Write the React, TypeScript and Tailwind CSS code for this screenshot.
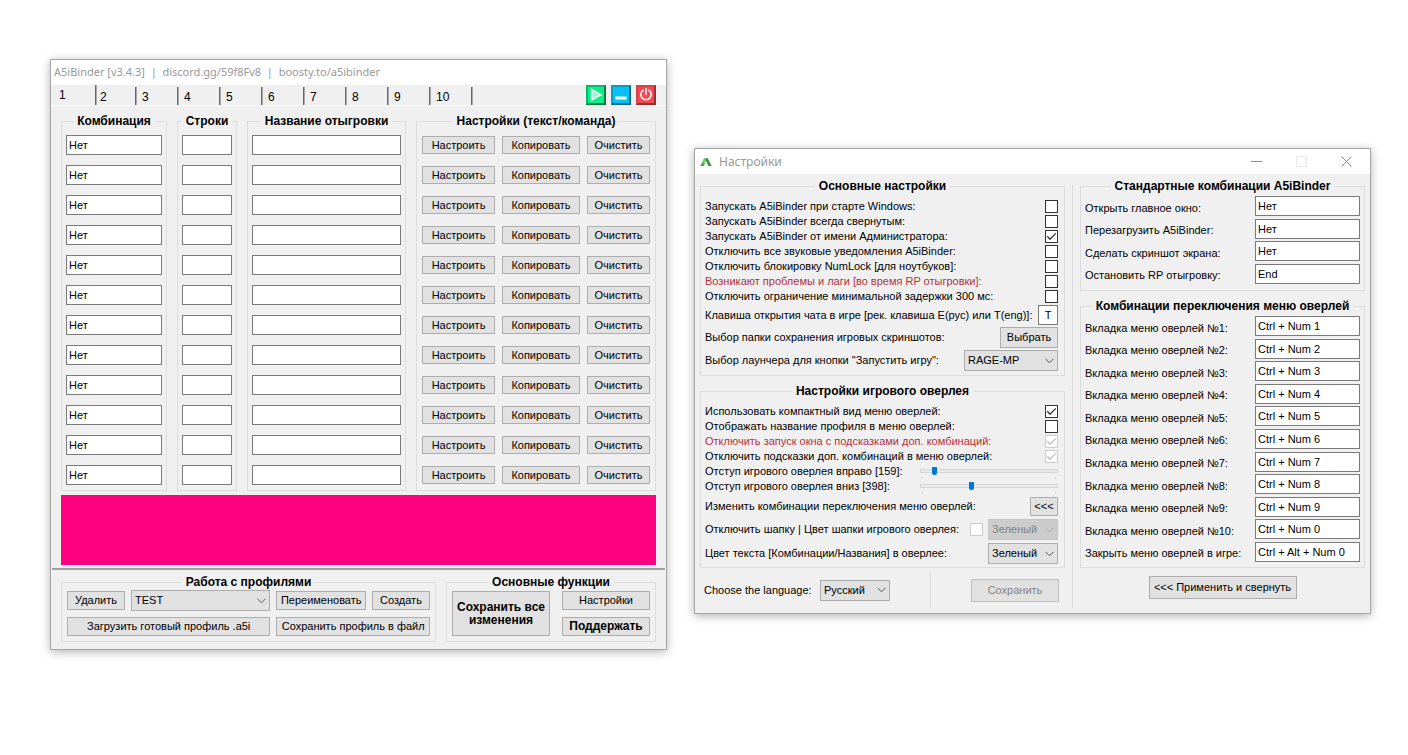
import React from "react";

const rows = Array.from({ length: 12 }, (_, i) => i + 1);
const tabs = Array.from({ length: 10 }, (_, i) => i + 1);

const Button = ({ className = "", children = null as React.ReactNode, ...rest }) => (
    <button
        type="button"
        className={`border border-[#adadad] bg-[#e1e1e1] text-center whitespace-nowrap ${className}`}
        {...rest}
    >
        {children}
    </button>
);

const Input = ({ className = "", ...rest }) => (
    <input
        type="text"
        className={`block h-5 w-full min-w-0 border border-[#7a7a7a] bg-white outline-none ${className}`}
        {...rest}
    />
);

const Group = ({ title = "", className = "", children = null as React.ReactNode }) => (
    <fieldset className={`min-w-0 border border-[#dcdcdc] ${className}`}>
        <legend className="mx-auto px-1 text-[12px] leading-[14px] font-bold whitespace-nowrap">{title}</legend>
        {children}
    </fieldset>
);

const Select = ({ id = "", label = "", options = [] as string[], disabled = false, className = "" }) => (
    <div className={`grid h-[21px] items-center ${className}`}>
        <select
            id={id || undefined}
            aria-label={label || undefined}
            disabled={disabled}
            className={
                disabled
                    ? "col-start-1 row-start-1 h-full w-full appearance-none border border-[#c5c5c5] bg-[#cccccc] px-[3px] text-[#838383]"
                    : "col-start-1 row-start-1 h-full w-full appearance-none border border-[#adadad] bg-[#e1e1e1] px-[3px]"
            }
        >
            {options.map(o => <option key={o}>{o}</option>)}
        </select>
        <svg
            viewBox="0 0 9 6"
            className={`pointer-events-none col-start-1 row-start-1 mr-1 h-[6px] w-[9px] justify-self-end ${disabled ? "text-[#a8a8a8]" : "text-[#555555]"}`}
            fill="none"
            stroke="currentColor"
        >
            <path d="M0.5 0.8 L4.5 4.8 L8.5 0.8" />
        </svg>
    </div>
);

const Checkbox = ({ id = "", checked = false, disabled = false }) => (
    <span className="grid size-[13px] shrink-0">
        <input
            id={id}
            type="checkbox"
            defaultChecked={checked}
            disabled={disabled}
            className="peer col-start-1 row-start-1 size-[13px] appearance-none border border-[#333333] bg-white disabled:border-[#cccccc]"
        />
        <svg
            viewBox="0 0 13 13"
            className="pointer-events-none invisible col-start-1 row-start-1 size-[13px] text-[#333333] peer-checked:visible peer-disabled:text-[#c0c0c0]"
            fill="none"
            stroke="currentColor"
            strokeWidth="1.3"
        >
            <path d="M2.3 6.3 L5 9.2 L10.8 3.4" />
        </svg>
    </span>
);

const CheckRow = ({ id = "", label = "", checked = false, disabled = false, red = false }) => (
    <div className="flex h-[15px] items-center justify-between">
        <label htmlFor={id} className={red ? "text-[#b5313a]" : ""}>{label}</label>
        <Checkbox id={id} checked={checked} disabled={disabled} />
    </div>
);

const SliderRow = ({ id = "", label = "", max = 100, value = 0 }) => (
    <div className="flex h-[15px] items-center justify-between">
        <label htmlFor={id}>{label}</label>
        <div className="flex w-[138px] flex-col pt-[3px]">
            <input
                id={id}
                type="range"
                max={max}
                defaultValue={value}
                className="block h-2 w-full appearance-none bg-transparent [&::-webkit-slider-runnable-track]:h-[4px] [&::-webkit-slider-runnable-track]:border [&::-webkit-slider-runnable-track]:border-[#d6d6d6] [&::-webkit-slider-runnable-track]:bg-[#e7eaea] [&::-webkit-slider-thumb]:-mt-[3px] [&::-webkit-slider-thumb]:h-[8px] [&::-webkit-slider-thumb]:w-[5px] [&::-webkit-slider-thumb]:appearance-none [&::-webkit-slider-thumb]:rounded-b-[2px] [&::-webkit-slider-thumb]:bg-[#0078d7]"
            />
            <div className="mt-[2px] flex h-[2px] justify-between px-[2px]">
                <span className="w-px bg-[#d0d0d0]" />
                <span className="w-px bg-[#d0d0d0]" />
            </div>
        </div>
    </div>
);

const HotkeyRow = ({ id = "", label = "", value = "" }) => (
    <div className="flex h-5 items-center justify-between">
        <label htmlFor={id} className="pt-1">{label}</label>
        <div className="w-[105px]">
            <Input id={id} defaultValue={value} className="px-[2px]" />
        </div>
    </div>
);

const BinderWindow = () => (
    <section className="mt-[59px] border border-[#a5a5a5] bg-[#f0f0f0] pb-[7px] shadow-[0_2px_9px_rgba(0,0,0,0.3)]">
        <header className="h-[25px] bg-white pl-[3px] font-['Noto_Sans',sans-serif] text-[11px] leading-[24px] text-[#999999]">
            A5iBinder [v3.4.3] &nbsp;|&nbsp; discord.gg/59f8Fv8 &nbsp;|&nbsp; boosty.to/a5ibinder
        </header>

        <div className="flex h-[21px] items-start justify-between border-b border-white pr-[10px] pl-px">
            <nav className="flex h-5 items-end text-[12px]" role="tablist">
                {tabs.map(n => (
                    <button
                        key={n}
                        type="button"
                        role="tab"
                        aria-selected={n === 1}
                        className={
                            n === 1
                                ? "-mr-[2px] h-5 w-[45px] border-r border-[#a8a8a8] pl-[7px] text-left leading-5 shadow-[inset_-1px_0_#696969]"
                                : "h-[18px] w-[42px] border-r border-[#a8a8a8] pt-px pl-[5px] text-left leading-[18px] shadow-[inset_-1px_0_#696969]"
                        }
                    >
                        {n}
                    </button>
                ))}
            </nav>
            <div className="flex gap-[5px]">
                <button type="button" aria-label="Запустить" className="size-5 border-2 border-t-[#0bb56a] border-r-[#067a45] border-b-[#067a45] border-l-[#0bb56a] bg-[#0cf08a]">
                    <svg viewBox="0 0 16 16" className="size-4" fill="#8ff8c8" stroke="#ffffff" strokeWidth="1.8">
                        <path d="M3.8 2.8 L12.6 7.8 L3.8 12.8 Z" />
                    </svg>
                </button>
                <button type="button" aria-label="Свернуть" className="size-5 border-2 border-t-[#0b9cc6] border-r-[#086a88] border-b-[#086a88] border-l-[#0b9cc6] bg-[#06c1f3]">
                    <svg viewBox="0 0 16 16" className="size-4">
                        <rect x="2.5" y="9.5" width="11" height="3" fill="#ffffff" />
                    </svg>
                </button>
                <button type="button" aria-label="Выход" className="size-5 border-2 border-t-[#d4444b] border-r-[#9c2c33] border-b-[#9c2c33] border-l-[#d4444b] bg-[#ee4b52]">
                    <svg viewBox="0 0 16 16" className="size-4" fill="none" stroke="#ffffff" strokeWidth="1.5" strokeLinecap="round">
                        <path d="M5 3.4 A5.2 5.2 0 1 0 11 3.4 M8 1.6 V7.5" />
                    </svg>
                </button>
            </div>
        </div>

        <div className="grid grid-cols-[106fr_60fr_159fr_240fr] gap-[10px] px-[10px] pt-2">
            <Group title="Комбинация">
                <div className="grid gap-[10px] px-1 pt-[7px] pb-[5px]">
                    {rows.map(n => <Input key={n} aria-label={`Комбинация ${n}`} defaultValue="Нет" className="px-[2px]" />)}
                </div>
            </Group>
            <Group title="Строки">
                <div className="grid gap-[10px] px-1 pt-[7px] pb-[5px]">
                    {rows.map(n => <Input key={n} aria-label={`Строки ${n}`} />)}
                </div>
            </Group>
            <Group title="Название отыгровки">
                <div className="grid gap-[10px] px-1 pt-[7px] pb-[5px]">
                    {rows.map(n => <Input key={n} aria-label={`Название отыгровки ${n}`} />)}
                </div>
            </Group>
            <Group title="Настройки (текст/команда)">
                <div className="grid gap-[10px] px-[5px] pt-[7px] pb-[5px]">
                    {rows.map(n => (
                        <div key={n} className="grid h-5 grid-cols-[73fr_78fr_63fr] gap-[7px] py-px">
                            <Button>Настроить</Button>
                            <Button>Копировать</Button>
                            <Button>Очистить</Button>
                        </div>
                    ))}
                </div>
            </Group>
        </div>

        <div className="mx-[10px] mt-1 h-[70px] bg-[#ff0080]" />
        <hr className="mx-px mt-[3px] border-t-2 border-[#a0a0a0]" />

        <div className="grid grid-cols-[375fr_210fr] gap-[10px] px-[10px] pt-[5px]">
            <Group title="Работа с профилями">
                <div className="grid grid-cols-[204fr_154fr] gap-[6px] px-[5px] pt-px pb-[5px]">
                    <div className="flex h-[21px] items-center gap-[6px]">
                        <Button className="h-[19px] w-[58px]">Удалить</Button>
                        <Select label="Профиль" options={["TEST"]} className="flex-1" />
                    </div>
                    <div className="flex h-[21px] items-center gap-[6px]">
                        <Button className="h-[19px] flex-1">Переименовать</Button>
                        <Button className="h-[19px] w-[58px]">Создать</Button>
                    </div>
                    <Button className="h-[19px]">Загрузить готовый профиль .a5i</Button>
                    <Button className="h-[19px]">Сохранить профиль в файл</Button>
                </div>
            </Group>
            <Group title="Основные функции">
                <div className="grid grid-cols-[98fr_88fr] gap-3 px-[5px] pt-[2px]">
                    <Button className="h-[45px] text-[12px] leading-[13px] font-bold">
                        Сохранить все<br />изменения
                    </Button>
                    <div className="flex flex-col justify-between">
                        <Button className="h-[19px]">Настройки</Button>
                        <Button className="h-[19px] text-[12px] leading-[13px] font-bold">Поддержать</Button>
                    </div>
                </div>
            </Group>
        </div>
    </section>
);

const SettingsWindow = () => (
    <section className="mt-[148px] border border-[#a5a5a5] bg-[#f0f0f0] shadow-[0_2px_9px_rgba(0,0,0,0.3)]">
        <header className="flex h-[25px] items-center bg-white pr-[18px] pl-[5px] font-['Noto_Sans',sans-serif] text-[12px] text-[#999999]">
            <svg viewBox="0 0 12 10" className="h-[10px] w-3">
                <path d="M0.3 9 L4 1 L7.6 1 L6 4 L3.8 9 Z" fill="#7ccb78" />
                <path d="M5.2 2.2 L7.6 1 L11.7 9 L8.4 9 Z" fill="#3f9146" />
                <path d="M0.3 9 L2.6 5.4 L4.6 7 L3.8 9 Z" fill="#4da652" />
            </svg>
            <span className="ml-[7px]">Настройки</span>
            <div className="ml-auto flex items-center gap-[34px]">
                <button type="button" aria-label="Свернуть">
                    <svg viewBox="0 0 11 11" className="size-[11px]" stroke="#8c8c8c"><path d="M0 5.5 H11" /></svg>
                </button>
                <button type="button" aria-label="Развернуть" disabled>
                    <svg viewBox="0 0 11 11" className="size-[11px]" fill="none" stroke="#e8e8e8"><path d="M0.5 0.5 H10.5 V10.5 H0.5 Z" /></svg>
                </button>
                <button type="button" aria-label="Закрыть">
                    <svg viewBox="0 0 11 11" className="size-[11px]" stroke="#8c8c8c"><path d="M0.5 0.5 L10.5 10.5 M10.5 0.5 L0.5 10.5" /></svg>
                </button>
            </div>
        </header>

        <div className="grid grid-cols-[365fr_1px_285fr] gap-[7px] px-[5px] pt-[5px] pb-[5px]">
            <div className="flex flex-col">
                <Group title="Основные настройки">
                    <div className="pt-[6px] pr-[6px] pb-1 pl-1">
                        <CheckRow id="autostart" label="Запускать A5iBinder при старте Windows:" />
                        <CheckRow id="minimized" label="Запускать A5iBinder всегда свернутым:" />
                        <CheckRow id="admin" label="Запускать A5iBinder от имени Администратора:" checked />
                        <CheckRow id="mute" label="Отключить все звуковые уведомления A5iBinder:" />
                        <CheckRow id="numlock" label="Отключить блокировку NumLock [для ноутбуков]:" />
                        <CheckRow id="lags" label="Возникают проблемы и лаги [во время RP отыгровки]:" red />
                        <CheckRow id="delay" label="Отключить ограничение минимальной задержки 300 мс:" />
                        <div className="mt-px flex h-5 items-center justify-between">
                            <label htmlFor="chat">Клавиша открытия чата в игре [рек. клавиша Е(рус) или T(eng)]:</label>
                            <div className="w-5"><Input id="chat" defaultValue="T" className="text-center" /></div>
                        </div>
                        <div className="mt-[2px] flex h-[21px] items-center justify-between">
                            <span>Выбор папки сохранения игровых скриншотов:</span>
                            <Button className="h-[21px] w-[58px]">Выбрать</Button>
                        </div>
                        <div className="mt-[2px] flex h-[21px] items-center justify-between">
                            <label htmlFor="launcher">Выбор лаунчера для кнопки "Запустить игру":</label>
                            <Select id="launcher" options={["RAGE-MP"]} className="w-[94px]" />
                        </div>
                    </div>
                </Group>
                <Group title="Настройки игрового оверлея" className="mt-2">
                    <div className="pt-[6px] pr-[6px] pb-[3px] pl-1">
                        <CheckRow id="compact" label="Использовать компактный вид меню оверлей:" checked />
                        <CheckRow id="profile-name" label="Отображать название профиля в меню оверлей:" />
                        <CheckRow id="hints-window" label="Отключить запуск окна с подсказками доп. комбинаций:" checked disabled red />
                        <CheckRow id="hints-menu" label="Отключить подсказки доп. комбинаций в меню оверлей:" checked disabled />
                        <SliderRow id="offset-x" label="Отступ игрового оверлея вправо [159]:" max={1920} value={159} />
                        <SliderRow id="offset-y" label="Отступ игрового оверлея вниз [398]:" max={1080} value={398} />
                        <div className="mt-[3px] flex h-[19px] items-center justify-between">
                            <span>Изменить комбинации переключения меню оверлей:</span>
                            <Button className="h-[19px] w-7">&lt;&lt;&lt;</Button>
                        </div>
                        <div className="mt-[3px] flex h-[21px] items-center">
                            <label htmlFor="no-header">Отключить шапку | Цвет шапки игрового оверлея:</label>
                            <div className="ml-auto flex items-center gap-[5px]">
                                <Checkbox id="no-header" disabled />
                                <Select label="Цвет шапки" options={["Зеленый"]} disabled className="w-[70px]" />
                            </div>
                        </div>
                        <div className="mt-[3px] flex h-[21px] items-center justify-between">
                            <label htmlFor="text-color">Цвет текста [Комбинации/Названия] в оверлее:</label>
                            <Select id="text-color" options={["Зеленый"]} className="w-[70px]" />
                        </div>
                    </div>
                </Group>
                <div className="mt-1 flex h-9 items-center pr-[6px] pl-1">
                    <label htmlFor="language" className="w-[116px]">Choose the language:</label>
                    <Select id="language" options={["Русский"]} className="w-[70px]" />
                    <span className="ml-10 h-9 w-px bg-[#dcdcdc]" />
                    <Button disabled className="ml-auto h-[23px] w-[88px] border-[#bfbfbf] bg-[#cccccc] text-[#838383]">Сохранить</Button>
                </div>
            </div>

            <div className="mt-[6px] bg-[#dcdcdc]" />

            <div className="flex flex-col">
                <Group title="Стандартные комбинации A5iBinder">
                    <div className="px-1 pt-[3px] pb-[6px]">
                        <div className="flex h-[88px] flex-col justify-between">
                            <HotkeyRow id="key-open" label="Открыть главное окно:" value="Нет" />
                            <HotkeyRow id="key-reload" label="Перезагрузить A5iBinder:" value="Нет" />
                            <HotkeyRow id="key-shot" label="Сделать скриншот экрана:" value="Нет" />
                            <HotkeyRow id="key-stop" label="Остановить RP отыгровку:" value="End" />
                        </div>
                    </div>
                </Group>
                <Group title="Комбинации переключения меню оверлей" className="mt-2">
                    <div className="px-1 pt-[3px] pb-[5px]">
                        <div className="flex h-[246px] flex-col justify-between">
                            {tabs.map(n => (
                                <HotkeyRow key={n} id={`key-tab-${n}`} label={`Вкладка меню оверлей №${n}:`} value={`Ctrl + Num ${n % 10}`} />
                            ))}
                            <HotkeyRow id="key-close" label="Закрыть меню оверлей в игре:" value="Ctrl + Alt + Num 0" />
                        </div>
                    </div>
                </Group>
                <Button className="mt-2 h-[23px] w-[148px] self-center">&lt;&lt;&lt; Применить и свернуть</Button>
            </div>
        </div>
    </section>
);

const App = () => (
    <main className="grid min-h-screen grid-cols-[617fr_677fr] items-start gap-[27px] bg-white pr-[37px] pl-[50px] font-['Liberation_Sans',sans-serif] text-[11px] leading-[13px] text-black">
        <BinderWindow />
        <SettingsWindow />
    </main>
);

export default App;
